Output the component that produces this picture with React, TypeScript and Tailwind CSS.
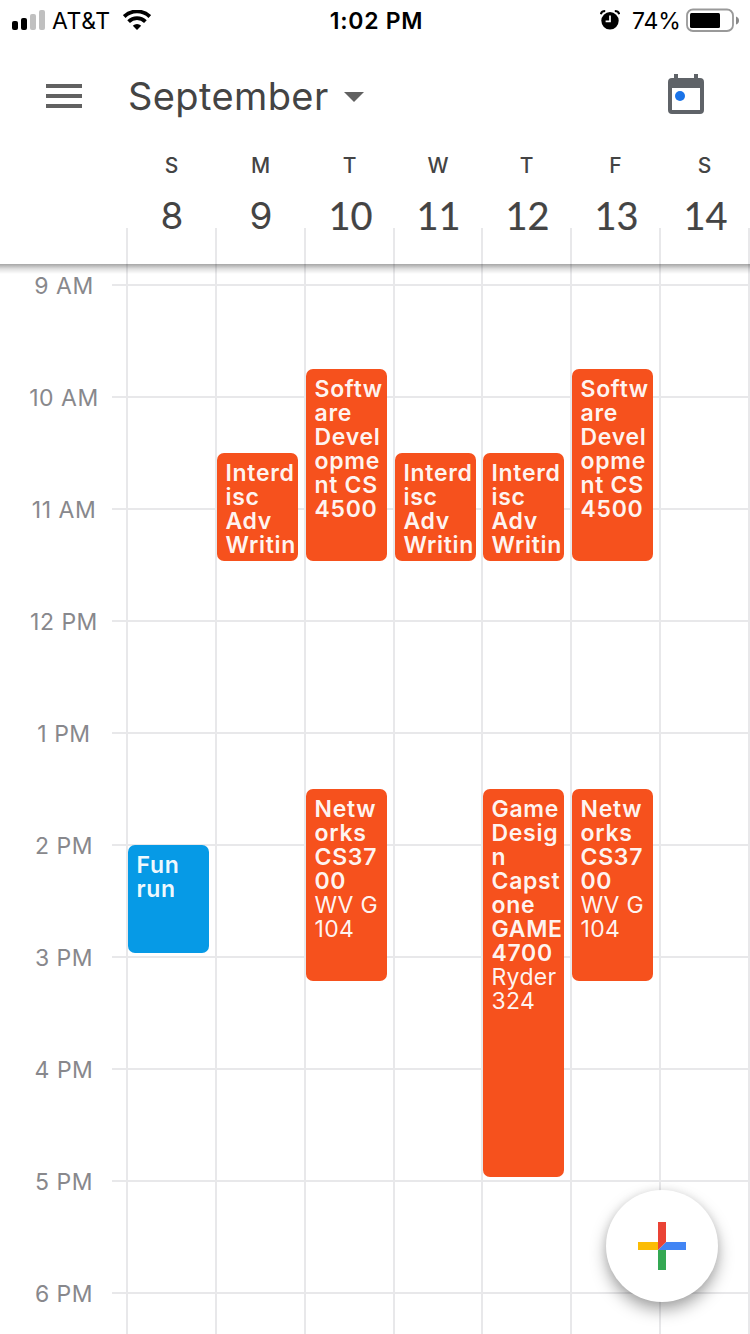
import React from "react";

type CalendarEvent = {
  lines: string[];
  place?: string[];
  /** Full Tailwind classes for offset, height and colour. */
  box: string;
};

type Day = { letter: string; date: string; dateClass: string; events: CalendarEvent[] };

const ORANGE = "bg-[#f6511d]";
const BLUE = "bg-[#069ae6]";

const writing: CalendarEvent = {
  lines: ["Interd", "isc", "Adv", "Writin"],
  box: `mt-[189px] h-[108px] ${ORANGE}`,
};
const software: CalendarEvent = {
  lines: ["Softw", "are", "Devel", "opme", "nt CS", "4500"],
  box: `mt-[105px] h-[192px] ${ORANGE}`,
};
const networks: CalendarEvent = {
  lines: ["Netw", "orks", "CS37", "00"],
  place: ["WV G", "104"],
  box: `mt-[228px] h-[192px] ${ORANGE}`,
};
const capstone: CalendarEvent = {
  lines: ["Game", "Desig", "n", "Capst", "one", "GAME", "4700"],
  place: ["Ryder", "324"],
  box: `mt-[228px] h-[388px] ${ORANGE}`,
};
const funRun: CalendarEvent = {
  lines: ["Fun", "run"],
  box: `mt-[581px] h-[108px] ${BLUE}`,
};

const ROUND_DIGITS = "pt-px font-[Inter,sans-serif] text-[37px]";
const WIDE_DIGITS = "font-[Lato,sans-serif] text-[38px] [-webkit-text-stroke:0.2px_#444]";

const days: Day[] = [
  { letter: "S", date: "8", dateClass: `pl-[3px] ${ROUND_DIGITS}`, events: [funRun] },
  { letter: "M", date: "9", dateClass: `pl-[3px] ${ROUND_DIGITS}`, events: [writing] },
  { letter: "T", date: "10", dateClass: `pl-[4px] ${WIDE_DIGITS}`, events: [software, networks] },
  { letter: "W", date: "11", dateClass: `pl-[3px] ${WIDE_DIGITS}`, events: [writing] },
  { letter: "T", date: "12", dateClass: `pl-[4px] ${WIDE_DIGITS}`, events: [writing, capstone] },
  { letter: "F", date: "13", dateClass: `pl-[4px] ${WIDE_DIGITS}`, events: [software, networks] },
  { letter: "S", date: "14", dateClass: `pl-[4px] ${WIDE_DIGITS}`, events: [] },
];

const hours = ["9 AM", "10 AM", "11 AM", "12 PM", "1 PM", "2 PM", "3 PM", "4 PM", "5 PM", "6 PM"];

const COLUMNS = "grid grid-cols-[89px_89px_89px_88px_89px_89px_89px_2px]";

function StatusBar() {
  return (
    <div className="flex h-10 items-center text-black">
      <div className="flex flex-1 items-center pl-3">
        <svg width="34" height="20" viewBox="0 0 34 20">
          <rect x="0" y="11" width="6" height="9" rx="2" />
          <rect x="9" y="8" width="6" height="12" rx="2" />
          <rect x="18" y="4" width="6" height="16" rx="2" fill="#c0c0c0" />
          <rect x="27" y="0" width="6" height="20" rx="2" fill="#c0c0c0" />
        </svg>
        <span className="ml-[6px] w-[59px] pt-[2px] text-[23px] leading-[38px] tracking-[0.6px]">AT&amp;T</span>
        <svg className="ml-3" width="28" height="20" viewBox="0 0 28 20" fill="none" stroke="#000">
          <path d="M1.2 6.6a18.4 18.4 0 0 1 25.6 0" strokeWidth="3.8" />
          <path d="M5.6 11.6a12 12 0 0 1 16.8 0" strokeWidth="3.8" />
          <path d="M14 20l-4.2-4.2a6 6 0 0 1 8.4 0z" fill="#000" stroke="none" />
        </svg>
      </div>
      <span className="pl-px pt-[2px] text-[23px] font-semibold leading-[38px] tracking-[0.7px]">1:02 PM</span>
      <div className="flex flex-1 items-center justify-end pr-[10px]">
        <svg width="20" height="20" viewBox="0 0 20 20">
          <circle cx="10" cy="10.8" r="8.7" />
          <path d="M0.8 4.2Q1.5 1 5.2 1M19.2 4.2Q18.5 1 14.8 1" stroke="#000" strokeWidth="2" fill="none" />
          <path d="M10 5.4v6H5.6" stroke="#fff" strokeWidth="1.7" fill="none" />
        </svg>
        <span className="ml-3 w-[47px] whitespace-nowrap pt-[2px] text-[23px] leading-[38px] tracking-[-0.1px]">
          74%
        </span>
        <svg className="ml-[7px]" width="54" height="24" viewBox="0 0 54 24">
          <rect x="1" y="1.5" width="46" height="21.5" rx="6" fill="none" stroke="#999" strokeWidth="1.8" />
          <rect x="4" y="5" width="30" height="15" rx="1.5" />
          <path d="M50 8.5q3 1 3 4t-3 4z" fill="#888" />
        </svg>
      </div>
    </div>
  );
}

function TitleBar() {
  return (
    <div className="flex h-[110px] items-center text-[#444]">
      <svg className="ml-[46px] mt-[2px]" width="36" height="24" viewBox="0 0 36 24" fill="#616161">
        <rect width="36" height="4" />
        <rect y="10" width="36" height="4" />
        <rect y="20" width="36" height="4" />
      </svg>
      <span className="ml-[46px] mt-[2px] w-[202px] whitespace-nowrap text-[38px] leading-[48px] tracking-[0.4px]">
        September
      </span>
      <svg className="ml-[14px] mt-[4px]" width="20" height="10" viewBox="0 0 20 10">
        <path d="M0 0h20L10 10z" fill="#616161" />
      </svg>
      <svg className="-mt-[2px] ml-auto mr-[46px]" width="36" height="40" viewBox="0 0 36 40">
        <path
          d="M6 0h4v4h16V0h4v4h2a4 4 0 0 1 4 4v28a4 4 0 0 1-4 4H4a4 4 0 0 1-4-4V8a4 4 0 0 1 4-4h2zM4 14v22h28V14z"
          fill="#5f6368"
          fillRule="evenodd"
        />
        <circle cx="12" cy="22" r="5" fill="#1a73e8" />
      </svg>
    </div>
  );
}

function WeekHeader() {
  return (
    <div className={`${COLUMNS} ml-[126px] h-[114px] text-[#444]`}>
      {days.map((day) => (
        <div key={day.date} className="grid grid-rows-[30px_48px_36px] text-center">
          <span className="pl-[2px] pt-px text-[21px] font-medium leading-[30px]">{day.letter}</span>
          <span className={`z-10 leading-[70px] ${day.dateClass}`}>{day.date}</span>
          <span className="border-l-2 border-[#e8e8ea]" />
        </div>
      ))}
      <span className="mt-[78px] border-l-2 border-[#e8e8ea]" />
    </div>
  );
}

function EventCard({ event }: { event: CalendarEvent }) {
  return (
    <div
      className={`w-[81px] shrink-0 overflow-hidden whitespace-nowrap rounded-[7px] pl-[8.5px] pt-2 text-[23px] leading-6 text-white/95 ${event.box}`}
    >
      {event.lines.map((line) => (
        <div key={line} className="font-semibold tracking-[0.7px]">
          {line}
        </div>
      ))}
      {event.place?.map((line) => (
        <div key={line} className="tracking-[0.3px]">
          {line}
        </div>
      ))}
    </div>
  );
}

function Timeline() {
  return (
    <div className="grid h-[1070px] grid-cols-[750px] grid-rows-[1070px] overflow-hidden">
      <div className="col-start-1 row-start-1 pt-[6px]">
        {hours.map((hour) => (
          <div key={hour} className="flex h-28 items-start">
            <span className="w-28 pl-[16px] text-center text-[23px] leading-[32px] tracking-[0.5px] text-[#88888c]">
              {hour}
            </span>
            <span className="mt-[14px] h-[2px] flex-1 bg-[#e8e8ea]" />
          </div>
        ))}
      </div>
      <div className={`${COLUMNS} col-start-1 row-start-1 ml-[126px]`}>
        {days.map((day) => (
          <div key={day.date} className="flex flex-col border-l-2 border-[#e8e8ea]">
            {day.events.map((event) => (
              <EventCard key={event.lines[0]} event={event} />
            ))}
          </div>
        ))}
        <span className="border-l-2 border-[#e8e8ea]" />
      </div>
      <div className="col-start-1 row-start-1 h-[10px] bg-linear-to-b from-black/35 via-black/12 to-transparent" />
    </div>
  );
}

export default function App() {
  return (
    <main className="relative h-[1334px] w-[750px] overflow-hidden bg-white font-[Inter,sans-serif]">
      <StatusBar />
      <TitleBar />
      <WeekHeader />
      <Timeline />
      <button
        aria-label="Create"
        className="absolute bottom-8 right-8 flex size-28 items-center justify-center rounded-full bg-white shadow-[0_8px_16px_rgba(0,0,0,0.34),0_0_8px_rgba(0,0,0,0.08)]"
      >
        <svg width="48" height="48" viewBox="0 0 48 48">
          <path d="M0 20h20v8H0z" fill="#fbbc05" />
          <path d="M20 28h8v20h-8z" fill="#34a853" />
          <path d="M28 20h20v8H20z" fill="#4285f4" />
          <path d="M20 0h8v20l-8 8z" fill="#ea4335" />
        </svg>
      </button>
    </main>
  );
}
